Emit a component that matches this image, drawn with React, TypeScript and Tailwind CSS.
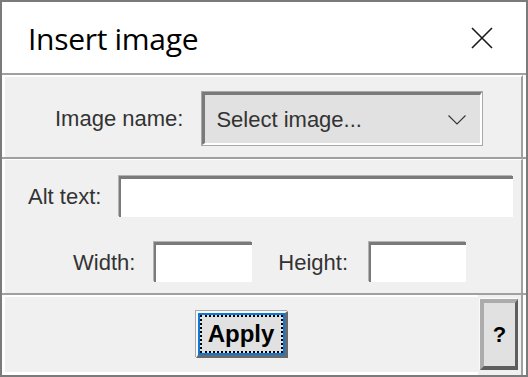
const sans = { fontFamily: '"Liberation Sans", Arial, sans-serif' };

export default function App() {
  return (
    <div
      className="w-[528px] h-[377px] border-2 border-[#7b7b7b] bg-white flex flex-col overflow-hidden"
      style={sans}
    >
      {/* Title bar */}
      <div className="h-[71px] flex items-center justify-between pl-[26px] pr-[33px]">
        <span
          className="text-[30px] leading-none text-black tracking-[-0.3px] pt-[3px]"
          style={{ fontFamily: '"Open Sans", "Noto Sans", sans-serif' }}
        >
          Insert image
        </span>
        <svg width="22" height="22" viewBox="0 0 22 22" className="mt-[1px]">
          <path d="M1 1L21 21M21 1L1 21" stroke="#1a1a1a" strokeWidth="1.6" fill="none" />
        </svg>
      </div>

      {/* Image name */}
      <div className="h-[84px] flex border-t-2 border-[#a0a0a0] bg-white pr-[3px]">
        <div className="flex-1 flex items-start pt-[14px] pl-[50px] bg-[#f0f0f0] border-t-2 border-l-[3px] border-white border-r-2 border-r-[#a0a0a0]">
          <div className="h-[55px] flex items-center">
            <span className="text-[22px] text-[#333]">Image name:</span>
          </div>
          <div className="ml-[18px] w-[282px] h-[55px] border border-[#a8a8a8]">
            <div className="h-full flex items-center justify-between pl-[11px] pr-[14px] bg-[#e1e1e1] border-t-[3px] border-l-[3px] border-[#7a7a7a] border-r-2 border-b-2 border-r-white border-b-white">
              <span className="text-[22px] text-[#333]">Select image...</span>
              <svg width="18" height="10" viewBox="0 0 18 10" className="mt-[1px]">
                <path d="M0.5 0.5L9 9L17.5 0.5" stroke="#333" strokeWidth="1.1" fill="none" />
              </svg>
            </div>
          </div>
        </div>
      </div>

      {/* Alt text / size */}
      <div className="h-[136px] flex border-t-2 border-[#a0a0a0] bg-white pr-[3px]">
        <div className="flex-1 flex flex-col pt-[16px] bg-[#f0f0f0] border-t border-l-[3px] border-white border-r-2 border-r-[#a0a0a0]">
          <div className="flex items-center pl-[23px]">
            <span className="text-[22px] text-[#333]">Alt text:</span>
            <input
              className="ml-[18px] w-[394px] h-[41px] bg-white border-t-[3px] border-l-2 border-[#7a7a7a] shadow-[-1px_-1px_0_#b4b4b4] outline-none"
            />
          </div>
          <div className="flex items-center pl-[68px] mt-[25px]">
            <span className="text-[22px] text-[#333]">Width:</span>
            <input
              className="ml-[19px] w-[98px] h-[40px] bg-white border-t-[3px] border-l-2 border-[#7a7a7a] shadow-[-1px_-1px_0_#b4b4b4] outline-none"
            />
            <span className="ml-[26px] text-[22px] text-[#333]">Height:</span>
            <input
              className="ml-[21px] w-[97px] h-[40px] bg-white border-t-[3px] border-l-2 border-[#7a7a7a] shadow-[-1px_-1px_0_#b4b4b4] outline-none"
            />
          </div>
        </div>
      </div>

      {/* Buttons */}
      <div className="flex-1 flex border-t-2 border-[#a0a0a0] bg-white pr-[3px]">
        <div className="flex-1 flex bg-[#f0f0f0] border-r-2 border-r-[#a0a0a0]">
          <div className="flex-1 flex items-center justify-center border-t-2 border-l-[3px] border-b-[3px] border-white">
            <button className="w-[92px] h-[47px] flex bg-[#e1e1e1] border-t-2 border-l-2 border-[#fafafa] border-r-[3px] border-b-[3px] border-r-[#696969] border-b-[#696969] shadow-[-1px_-1px_0_#a8a8a8]">
              <div className="flex-1 flex border-2 border-[#0a78d4]">
                <div className="flex-1 flex items-center justify-center border-2 border-dotted border-black">
                  <span className="text-[24px] font-bold leading-none text-black">Apply</span>
                </div>
              </div>
            </button>
          </div>
          <div className="w-[43px] pt-[4px] pb-[5px] pl-[2px] pr-[3px] flex">
            <button className="flex-1 flex items-center justify-center bg-[#e1e1e1] border-t-[4px] border-l-[4px] border-[#acacac] border-r-[3px] border-b-[4px] border-r-[#5e5e5e] border-b-[#5e5e5e] shadow-[-1px_-1px_0_#fafafa]">
              <span className="text-[22px] font-bold leading-none text-black">?</span>
            </button>
          </div>
        </div>
      </div>
    </div>
  );
}
